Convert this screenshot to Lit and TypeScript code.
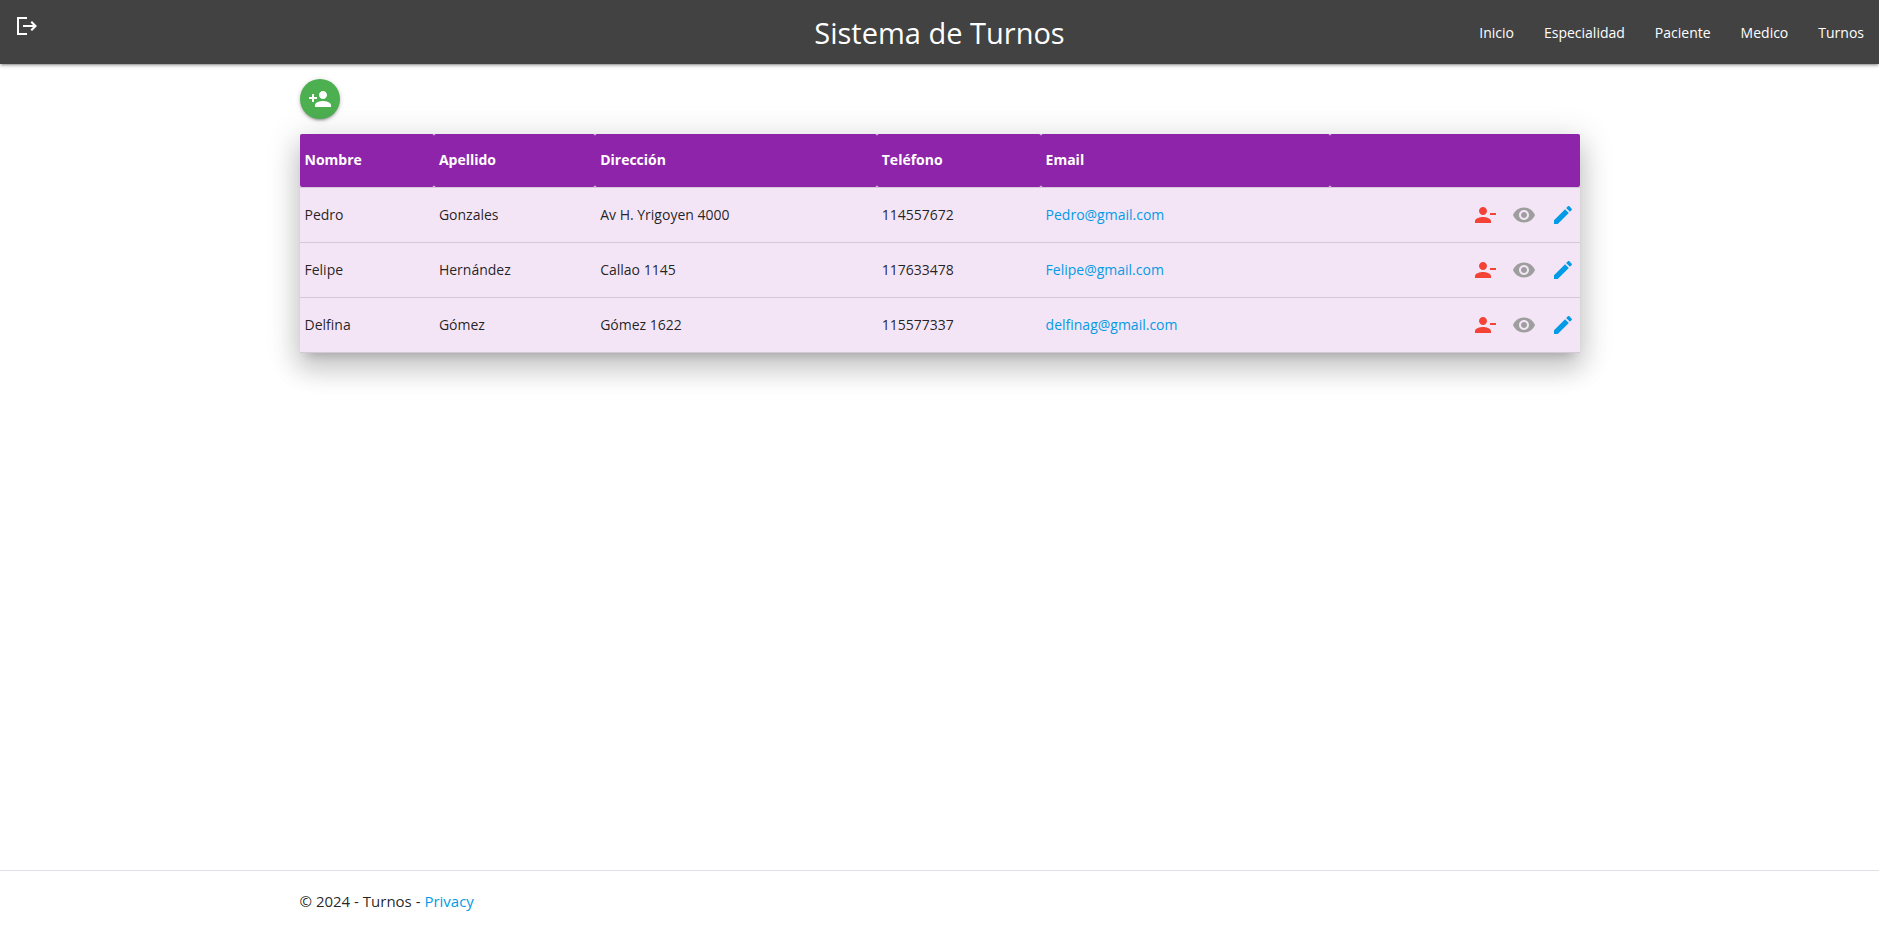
import { LitElement, html, css, svg } from "lit";
import { customElement } from "lit/decorators.js";

interface Patient {
  nombre: string;
  apellido: string;
  direccion: string;
  telefono: string;
  email: string;
}

const patients: Patient[] = [
  { nombre: "Pedro", apellido: "Gonzales", direccion: "Av H. Yrigoyen 4000", telefono: "114557672", email: "Pedro@gmail.com" },
  { nombre: "Felipe", apellido: "Hernández", direccion: "Callao 1145", telefono: "117633478", email: "Felipe@gmail.com" },
  { nombre: "Delfina", apellido: "Gómez", direccion: "Gómez 1622", telefono: "115577337", email: "delfinag@gmail.com" },
];

const navItems = ["Inicio", "Especialidad", "Paciente", "Medico", "Turnos"];

const icons = {
  logout: svg`<path d="M3 3h10v2H5v14h8v2H3z"/><path d="M18 7l5 5-5 5-1.500-1.500 2.500-2.500H9v-2h10l-2.500-2.500z"/>`,
  personAdd: svg`<path d="M15 12c2.21 0 4-1.79 4-4s-1.79-4-4-4-4 1.79-4 4 1.79 4 4 4zm-9-2V7H4v3H1v2h3v3h2v-3h3v-2H6zm9 4c-2.67 0-8 1.34-8 4v2h16v-2c0-2.66-5.33-4-8-4z"/>`,
  personRemove: svg`<path d="M14 8c0-2.21-1.79-4-4-4S6 5.790 6 8s1.790 4 4 4 4-1.790 4-4zm3 2v2h6v-2h-6zM2 18v2h16v-2c0-2.660-5.330-4-8-4s-8 1.340-8 4z"/>`,
  eye: svg`<path d="M12 4.500C7 4.500 2.730 7.610 1 12c1.730 4.390 6 7.500 11 7.500s9.270-3.110 11-7.500c-1.730-4.390-6-7.500-11-7.500zM12 17c-2.760 0-5-2.240-5-5s2.240-5 5-5 5 2.240 5 5-2.240 5-5 5zm0-8c-1.660 0-3 1.340-3 3s1.340 3 3 3 3-1.340 3-3-1.340-3-3-3z"/>`,
  pencil: svg`<path d="M3 17.250V21h3.750L17.810 9.940l-3.750-3.750L3 17.250zM20.710 7.040c.39-.39.39-1.020 0-1.410l-2.340-2.340c-.39-.39-1.020-.39-1.410 0l-1.830 1.830 3.750 3.750 1.830-1.830z"/>`,
};

const icon = (name: keyof typeof icons) =>
  html`<svg class="icon" viewBox="0 0 24 24" width="24" height="24" aria-hidden="true">${icons[name]}</svg>`;

@customElement("app-root")
export class AppRoot extends LitElement {
  static styles = css`
    :host {
      display: flex;
      flex-direction: column;
      min-height: 100vh;
      font-family: "Segoe UI", "Open Sans", "Noto Sans", sans-serif;
      font-size: 14px;
      line-height: 22px;
      color: rgba(0, 0, 0, 0.87);
      background: #fff;
    }
    *, *::before, *::after {
      box-sizing: border-box;
    }
    a {
      color: #039be5;
      text-decoration: none;
    }
    .icon {
      display: block;
      fill: currentColor;
    }
    .bar {
      display: grid;
      grid-template-columns: 1fr auto 1fr;
      align-items: center;
      height: 64px;
      background: #424242;
      color: #fff;
      box-shadow: 0 2px 2px 0 rgba(0, 0, 0, 0.14), 0 3px 1px -2px rgba(0, 0, 0, 0.12), 0 1px 5px 0 rgba(0, 0, 0, 0.2);
    }
    .bar a {
      color: inherit;
    }
    .logout {
      align-self: start;
      justify-self: start;
      padding: 14px;
    }
    .brand {
      font-size: 29px;
      line-height: 66px;
    }
    .menu {
      display: flex;
      justify-content: flex-end;
      margin: 0;
      padding: 0;
      list-style: none;
    }
    .menu a {
      display: block;
      padding: 0 15px;
      line-height: 66px;
    }
    .container {
      width: 90%;
      max-width: 1280px;
      margin: 0 auto;
    }
    .main {
      flex: 1;
      padding-top: 15px;
    }
    .add {
      display: flex;
      align-items: center;
      justify-content: center;
      width: 40px;
      height: 40px;
      margin-bottom: 15px;
      padding: 0;
      border: 0;
      border-radius: 50%;
      background: #4caf50;
      color: #fff;
      cursor: pointer;
      box-shadow: 0 2px 2px 0 rgba(0, 0, 0, 0.14), 0 3px 1px -2px rgba(0, 0, 0, 0.12), 0 1px 5px 0 rgba(0, 0, 0, 0.2);
    }
    .table {
      width: 100%;
      table-layout: fixed;
      border-collapse: collapse;
      background: #f3e5f5;
      box-shadow: 0 16px 24px 2px rgba(0, 0, 0, 0.14), 0 6px 30px 5px rgba(0, 0, 0, 0.12), 0 8px 10px -7px rgba(0, 0, 0, 0.2);
    }
    .w-name { width: 10.5%; }
    .w-last { width: 12.6%; }
    .w-street { width: 22%; }
    .w-phone { width: 12.8%; }
    .w-mail { width: 22.6%; }
    .table tr {
      border-bottom: 1px solid rgba(0, 0, 0, 0.12);
    }
    .table th {
      height: 53px;
      padding: 0 5px;
      border-radius: 2px;
      background: #8e24aa;
      color: #fff;
      font-weight: 700;
      text-align: left;
    }
    .table td {
      height: 55px;
      padding: 0 5px;
    }
    .actions {
      display: flex;
      justify-content: flex-end;
      gap: 15px;
    }
    .remove { color: #f44336; }
    .view { color: #9e9e9e; }
    .footer {
      border-top: 1px solid #dee2e6;
      font-size: 15px;
      line-height: 60px;
    }
  `;

  render() {
    return html`
      <header class="bar">
        <a class="logout" href="#salir" aria-label="Salir">${icon("logout")}</a>
        <a class="brand" href="#inicio">Sistema de Turnos</a>
        <nav>
          <ul class="menu">
            ${navItems.map((item) => html`<li><a href="#${item.toLowerCase()}">${item}</a></li>`)}
          </ul>
        </nav>
      </header>
      <main class="container main">
        <button class="add" type="button" aria-label="Agregar paciente">${icon("personAdd")}</button>
        <table class="table">
          <thead>
            <tr>
              <th class="w-name">Nombre</th>
              <th class="w-last">Apellido</th>
              <th class="w-street">Dirección</th>
              <th class="w-phone">Teléfono</th>
              <th class="w-mail">Email</th>
              <th></th>
            </tr>
          </thead>
          <tbody>
            ${patients.map(
              (p) => html`
                <tr>
                  <td>${p.nombre}</td>
                  <td>${p.apellido}</td>
                  <td>${p.direccion}</td>
                  <td>${p.telefono}</td>
                  <td><a href="mailto:${p.email}">${p.email}</a></td>
                  <td>
                    <div class="actions">
                      <a class="remove" href="#eliminar" aria-label="Eliminar">${icon("personRemove")}</a>
                      <a class="view" href="#detalle" aria-label="Ver detalle">${icon("eye")}</a>
                      <a class="edit" href="#editar" aria-label="Editar">${icon("pencil")}</a>
                    </div>
                  </td>
                </tr>
              `
            )}
          </tbody>
        </table>
      </main>
      <footer class="footer">
        <div class="container">© 2024 - Turnos - <a href="#privacy">Privacy</a></div>
      </footer>
    `;
  }
}
